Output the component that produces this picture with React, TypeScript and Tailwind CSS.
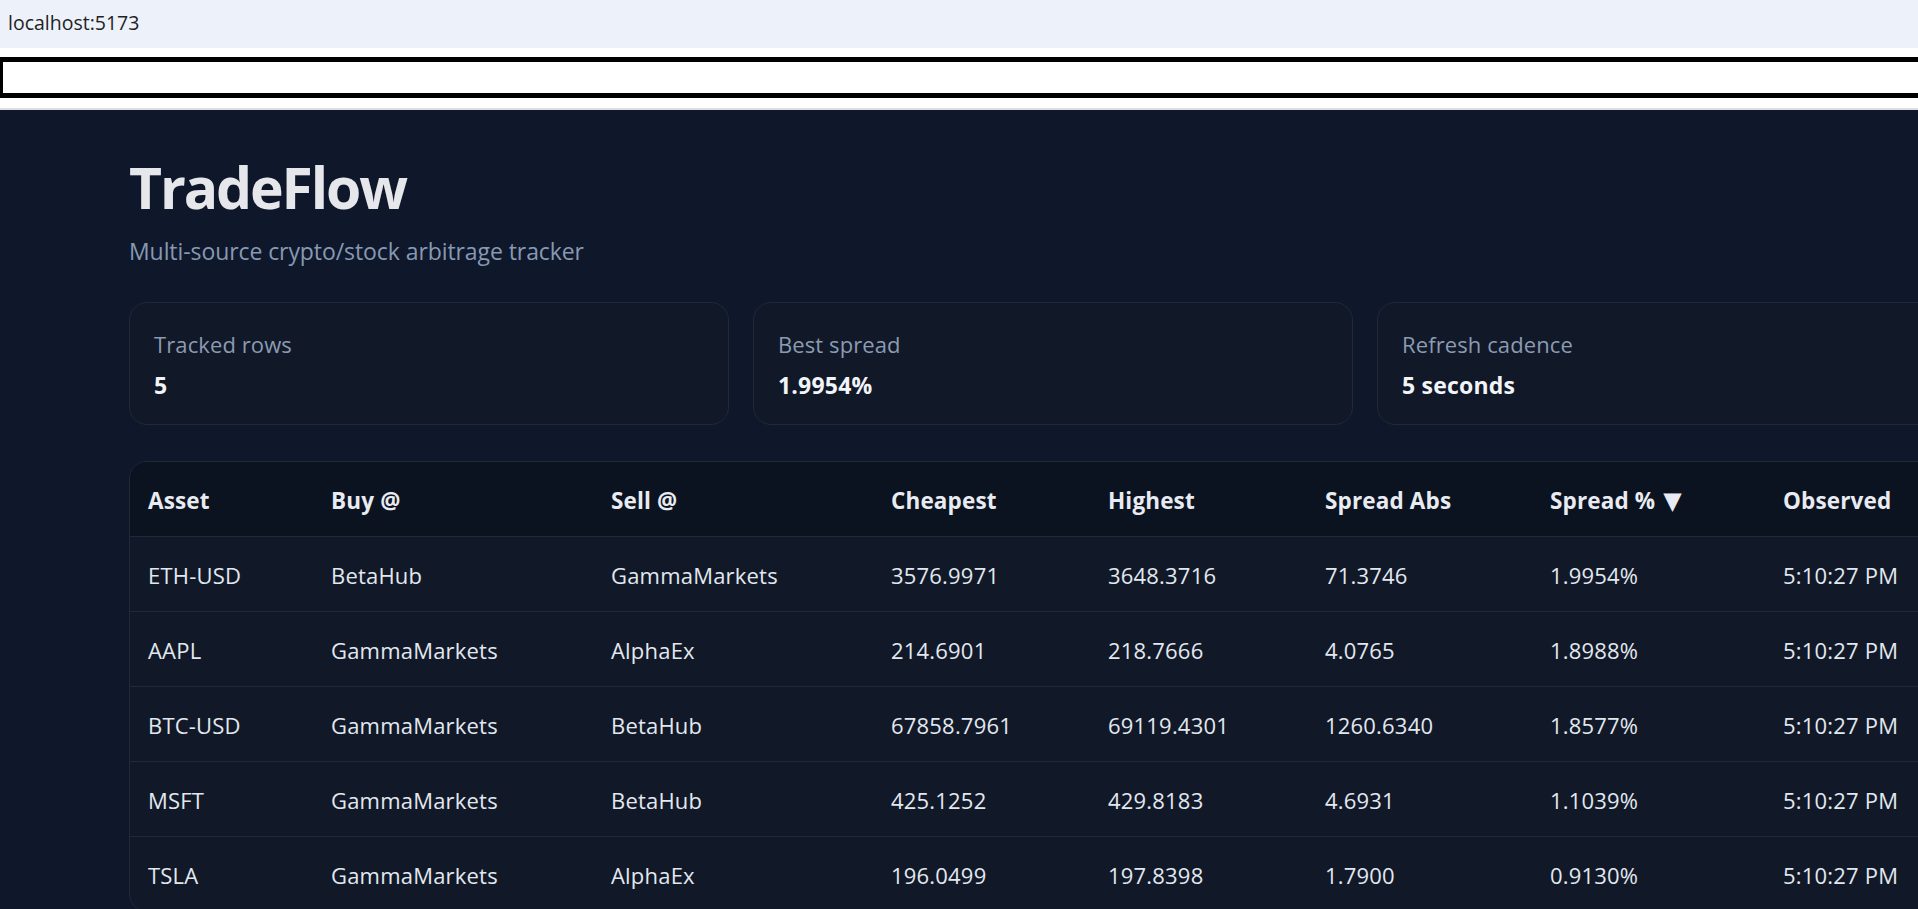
const font = "[font-family:'Open_Sans','Noto_Sans',sans-serif]";

const stats = [
  { label: "Tracked rows", value: "5" },
  { label: "Best spread", value: "1.9954%" },
  { label: "Refresh cadence", value: "5 seconds" },
];

const columns = [
  { title: "Asset", width: "w-[183px]" },
  { title: "Buy @", width: "w-[280px]" },
  { title: "Sell @", width: "w-[280px]" },
  { title: "Cheapest", width: "w-[217px]" },
  { title: "Highest", width: "w-[217px]" },
  { title: "Spread Abs", width: "w-[225px]" },
  { title: "Spread %", width: "w-[233px]", sorted: true },
  { title: "Observed", width: "w-[160px]" },
];

const rows = [
  ["ETH-USD", "BetaHub", "GammaMarkets", "3576.9971", "3648.3716", "71.3746", "1.9954%", "5:10:27 PM"],
  ["AAPL", "GammaMarkets", "AlphaEx", "214.6901", "218.7666", "4.0765", "1.8988%", "5:10:27 PM"],
  ["BTC-USD", "GammaMarkets", "BetaHub", "67858.7961", "69119.4301", "1260.6340", "1.8577%", "5:10:27 PM"],
  ["MSFT", "GammaMarkets", "BetaHub", "425.1252", "429.8183", "4.6931", "1.1039%", "5:10:27 PM"],
  ["TSLA", "GammaMarkets", "AlphaEx", "196.0499", "197.8398", "1.7900", "0.9130%", "5:10:27 PM"],
];

export default function App() {
  return (
    <div className={`${font} w-[1918px] h-[909px] overflow-hidden bg-white`}>
      {/* browser address strip */}
      <div className="h-[48px] bg-[#ecf1fa] pl-[8px] text-[19.5px] leading-[46px] text-[#1f1f1f]">
        localhost:5173
      </div>
      <div className="h-[62px] pt-[9px] border-b-2 border-[#dedede] overflow-hidden">
        <input
          aria-label="address"
          className="block w-[2300px] h-[41px] bg-white border-y-[5px] border-l-[3px] border-black outline-none"
        />
      </div>

      <div className="h-[799px] bg-[#0f172a] pl-[129px] overflow-hidden">
        <h1 className="pt-[40px] text-[57px] leading-[75px] font-bold text-[#e5e7eb] tracking-[-2.1px]">TradeFlow</h1>
        <p className="mt-[10px] text-[23px] leading-[32px] text-[#8799b3] tracking-[-0.08px]">
          Multi-source crypto/stock arbitrage tracker
        </p>

        <div className="mt-[35px] flex gap-[24px] w-[2000px]">
          {stats.map((s) => (
            <div
              key={s.label}
              className="w-[600px] h-[123px] shrink-0 rounded-[18px] border border-[#1f2937] bg-[#111827] pl-[24px] pt-[26px]"
            >
              <div className="text-[22px] leading-[30px] text-[#8b9bb3] tracking-[0.1px]">{s.label}</div>
              <div className="mt-[11px] text-[23px] leading-[30px] font-bold text-[#f1f5f9] tracking-[0.2px]">{s.value}</div>
            </div>
          ))}
        </div>

        <div className="mt-[36px] w-[1900px] rounded-[18px] border border-[#1f2937] bg-[#111827] overflow-hidden">
          <table className="table-fixed border-collapse text-left w-[1760px]">
            <thead className="bg-[#0b1220]">
              <tr className="h-[74px] border-b border-[#1f2937]">
                {columns.map((c) => (
                  <th key={c.title} className={`${c.width} pl-[18px] pt-[5px] text-[22.5px] font-bold text-[#e8ebf1] tracking-[0.15px]`}>
                    {c.title}
                    {c.sorted && <span className="ml-[8px] text-[24px] [font-family:'DejaVu_Sans',sans-serif]">▼</span>}
                  </th>
                ))}
              </tr>
            </thead>
            <tbody>
              {rows.map((row) => (
                <tr key={row[0]} className="h-[75px] border-b border-[#1f2937] last:border-b-0">
                  {row.map((cell, i) => (
                    <td key={i} className="pl-[18px] pt-[3px] text-[22px] text-[#e2e8f0] tracking-[0.2px]">
                      {cell}
                    </td>
                  ))}
                </tr>
              ))}
            </tbody>
          </table>
        </div>
      </div>
    </div>
  );
}
